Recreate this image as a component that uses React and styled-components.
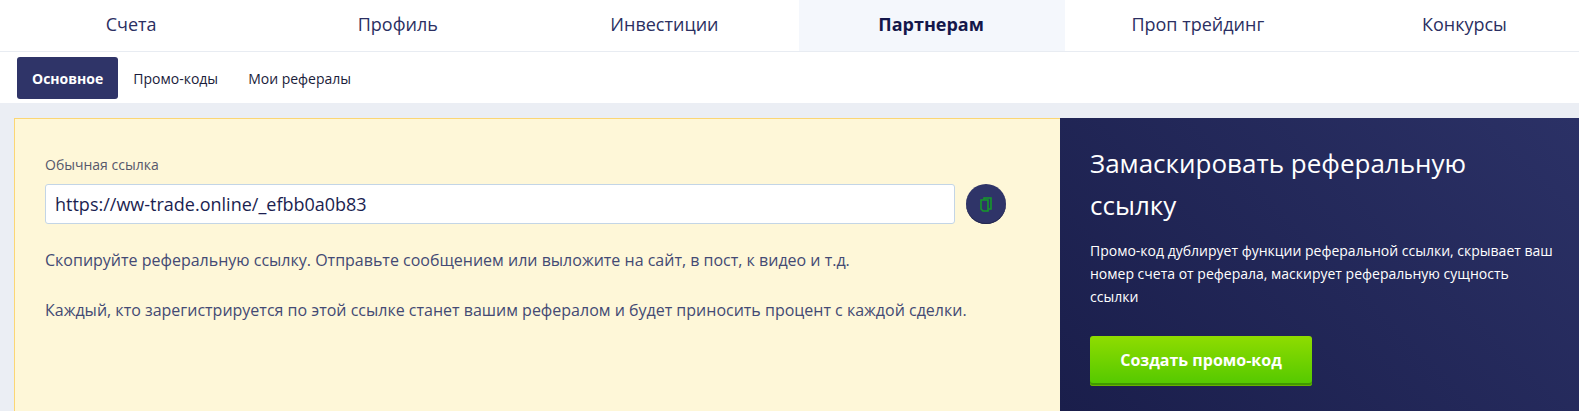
import React from 'react';
import styled, { createGlobalStyle } from 'styled-components';

const GlobalStyle = createGlobalStyle`
  html, body {
    margin: 0;
    padding: 0;
    overflow: hidden;
    background: #ebeef4;
    font-family: "Open Sans", "Liberation Sans", sans-serif;
  }
  * { box-sizing: border-box; }
`;

const Page = styled.div`
  width: 1579px;
  height: 411px;
  overflow: hidden;
`;

const TopNav = styled.nav`
  display: grid;
  grid-template-columns: repeat(6, 1fr);
  height: 52px;
  margin-left: -1.2px;
  width: 1600px;
  background: #fff;
  border-bottom: 1px solid #e8ecf2;
`;

const TopItem = styled.a`
  display: flex;
  align-items: center;
  justify-content: center;
  height: 51px;
  padding: 0 2px 4px 0;
  font-size: 18px;
  color: ${p => (p.$active ? '#14174a' : '#2b2f62')};
  font-weight: ${p => (p.$active ? 700 : 400)};
  background: ${p => (p.$active ? '#f4f7fc' : 'transparent')};
`;

const SubNav = styled.div`
  display: flex;
  align-items: center;
  height: 51px;
  padding: 1px 0 0 17px;
  background: #fff;
`;

const SubItem = styled.a`
  display: flex;
  align-items: center;
  height: 42px;
  padding: 0 15px;
  border-radius: 3px;
  font-size: 14px;
  color: ${p => (p.$active ? '#fff' : '#1a1c3a')};
  font-weight: ${p => (p.$active ? 700 : 400)};
  background: ${p => (p.$active ? '#2f3468' : 'transparent')};
`;

const Content = styled.main`
  display: flex;
  margin: 15px 0 0 14px;
  height: 293px;
`;

const LinkPanel = styled.section`
  width: 1046px;
  padding: 36px 31px 0 30px;
  background: #fef7d8;
  border: 1px solid #fbd674;
  border-width: 1px 0 0 1px;
`;

const FieldLabel = styled.div`
  font-size: 14px;
  line-height: 19px;
  color: #56586c;
  margin-bottom: 10px;
`;

const FieldRow = styled.div`
  display: flex;
  align-items: center;
  gap: 11px;
  margin-bottom: 25px;
`;

const LinkInput = styled.input`
  width: 910px;
  height: 40px;
  padding: 0 9px;
  border: 1px solid #c3d5e6;
  border-radius: 3px;
  background: #fff;
  font-family: inherit;
  font-size: 18px;
  color: #1b1e50;
  outline: none;
`;

const CopyButton = styled.button`
  display: flex;
  align-items: center;
  justify-content: center;
  width: 40px;
  height: 40px;
  padding: 0;
  border: 0;
  border-radius: 50%;
  background: #2f3468;
  box-shadow: inset 0 -1px 0 #24284f;
`;

const Note = styled.p`
  margin: 0 0 28px;
  font-size: 16px;
  line-height: 22px;
  color: #434a74;
`;

const PromoPanel = styled.section`
  width: 519px;
  padding: 24px 30px 0;
  background: linear-gradient(45deg, #1a1e4b 0%, #2b3166 100%);
  color: #fff;
`;

const PromoTitle = styled.h2`
  margin: 0 0 13px;
  font-size: 26px;
  font-weight: 400;
  line-height: 42px;
`;

const PromoText = styled.p`
  margin: 0 0 28px;
  width: 465px;
  font-size: 14px;
  line-height: 23px;
`;

const PromoButton = styled.button`
  display: block;
  width: 222px;
  height: 50px;
  padding: 0 0 2px;
  border: 0;
  border-radius: 3px;
  background: linear-gradient(180deg, #8fdc00 0%, #52c800 100%);
  box-shadow: inset 0 -1px 0 #6ab000, inset 0 -3px 0 #409a00;
  font-family: inherit;
  font-size: 16px;
  font-weight: 700;
  color: #fff;
`;

const CopyIcon = () => (
  <svg width="12" height="15" viewBox="0 0 12 15" fill="none" stroke="#16992a" strokeWidth="1.6">
    <path d="M4 2.5V1h7v11H8.5" />
    <path d="M1 3h7v11H3l-2-2z" />
  </svg>
);

const topItems = ['Счета', 'Профиль', 'Инвестиции', 'Партнерам', 'Проп трейдинг', 'Конкурсы'];
const subItems = ['Основное', 'Промо-коды', 'Мои рефералы'];

const App = () => (
  <Page>
    <GlobalStyle />
    <TopNav>
      {topItems.map(item => (
        <TopItem key={item} $active={item === 'Партнерам'}>{item}</TopItem>
      ))}
    </TopNav>
    <SubNav>
      {subItems.map(item => (
        <SubItem key={item} $active={item === 'Основное'}>{item}</SubItem>
      ))}
    </SubNav>
    <Content>
      <LinkPanel>
        <FieldLabel>Обычная ссылка</FieldLabel>
        <FieldRow>
          <LinkInput readOnly value="https://ww-trade.online/_efbb0a0b83" />
          <CopyButton><CopyIcon /></CopyButton>
        </FieldRow>
        <Note>Скопируйте реферальную ссылку. Отправьте сообщением или выложите на сайт, в пост, к видео и т.д.</Note>
        <Note>Каждый, кто зарегистрируется по этой ссылке станет вашим рефералом и будет приносить процент с каждой сделки.</Note>
      </LinkPanel>
      <PromoPanel>
        <PromoTitle>Замаскировать реферальную ссылку</PromoTitle>
        <PromoText>Промо-код дублирует функции реферальной ссылки, скрывает ваш номер счета от реферала, маскирует реферальную сущность ссылки</PromoText>
        <PromoButton>Создать промо-код</PromoButton>
      </PromoPanel>
    </Content>
  </Page>
);

export default App;
